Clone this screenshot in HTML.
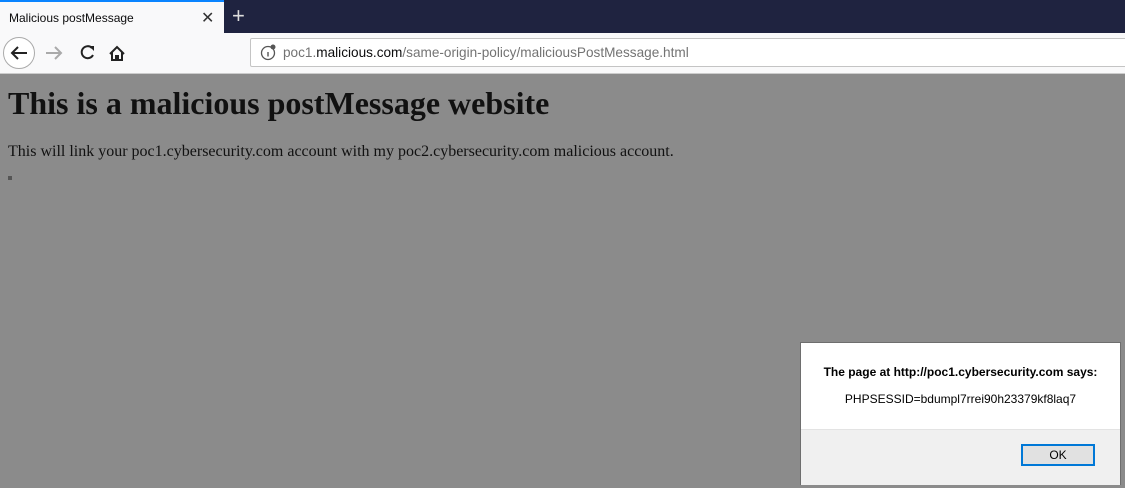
<!DOCTYPE html>
<html><head><style>
*{margin:0;padding:0;box-sizing:border-box}
body{width:1125px;height:488px;overflow:hidden;background:#8b8b8b;position:relative;font-family:"Liberation Sans",sans-serif}
#tabs{position:absolute;left:0;top:0;width:1125px;height:33px;background:#1f2340}
#tab{position:absolute;left:0;top:0;width:224px;height:33px;background:#f9f9fa;border-top:2px solid #0a84ff}
#tab span{position:absolute;left:9px;top:9px;font-size:12px;color:#0c0c0d}
#tab b{position:absolute;left:201px;top:6px;font-weight:normal;font-size:16px;color:#333}
#plus{position:absolute;left:232px;top:3px;color:#ddd;font-size:22px}
#nav{position:absolute;left:0;top:33px;width:1125px;height:41px;background:#f9f9fa;border-bottom:1px solid #ccc}
#url{position:absolute;left:250px;top:5px;width:880px;height:29px;background:#fff;border:1px solid #c4c4c4;border-radius:2px}
#url span{position:absolute;left:32px;top:6px;font-size:13.6px;color:#737373}
#url span b{font-weight:normal;color:#0c0c0d}
h1{position:absolute;left:8px;top:85px;font-family:"Liberation Serif",serif;font-size:32px;color:#111;font-weight:bold}
p{position:absolute;left:8px;top:143px;font-family:"Liberation Serif",serif;font-size:16px;color:#111}
#sq{position:absolute;left:8px;top:176px;width:4px;height:4px;background:#555}
#dlg{position:absolute;left:800px;top:342px;width:321px;height:143px;background:#fff;border:1px solid #6e6e6e}
#dlg .t{position:absolute;left:0;width:100%;text-align:center;top:22px;font-size:12px;font-weight:bold;color:#000}
#dlg .m{position:absolute;left:0;width:100%;text-align:center;top:49px;font-size:12px;color:#000}
#foot{position:absolute;left:0;top:86px;width:100%;height:56px;background:#f0f0f0;border-top:1px solid #e3e3e3}
#ok{position:absolute;left:220px;top:14px;width:74px;height:22px;background:#e1e1e1;border:2px solid #0078d7;font-size:12px;text-align:center;line-height:18px}
</style></head><body>
<div id="tabs"><div id="tab"><span>Malicious postMessage</span><b>✕</b></div><div id="plus">+</div></div>
<div id="nav">
<svg width="250" height="41" style="position:absolute;left:0;top:0">
<circle cx="19" cy="20" r="15.5" fill="#fff" stroke="#aaa"/>
<path d="M27 20H12M18 14L12 20L18 26" stroke="#222" stroke-width="2" fill="none"/>
<path d="M61 20H46M55 14L61 20L55 26" stroke="#aaa" stroke-width="2" fill="none"/>
<path d="M92 15A6 6 0 1 0 93 22" stroke="#222" stroke-width="2" fill="none"/><path d="M89 13h5v5z" fill="#222"/>
<path d="M110 21L117 14L124 21M112 19v8h10v-8" stroke="#222" stroke-width="2" fill="none"/><rect x="115" y="22" width="4" height="5" fill="#222"/>
</svg>
<div id="url"><svg width="20" height="20" style="position:absolute;left:8px;top:4px"><circle cx="9" cy="10" r="6.5" fill="none" stroke="#555" stroke-width="1.3"/><rect x="8.3" y="9" width="1.4" height="4.5" fill="#555"/><circle cx="14" cy="4" r="2.5" fill="#555"/></svg><span>poc1.<b>malicious.com</b>/same-origin-policy/maliciousPostMessage.html</span></div>
</div>
<h1>This is a malicious postMessage website</h1>
<p>This will link your poc1.cybersecurity.com account with my poc2.cybersecurity.com malicious account.</p>
<div id="sq"></div>
<div id="dlg"><div class="t">The page at http://poc1.cybersecurity.com says:</div><div class="m">PHPSESSID=bdumpl7rrei90h23379kf8laq7</div>
<div id="foot"><div id="ok">OK</div></div></div>
</body></html>
